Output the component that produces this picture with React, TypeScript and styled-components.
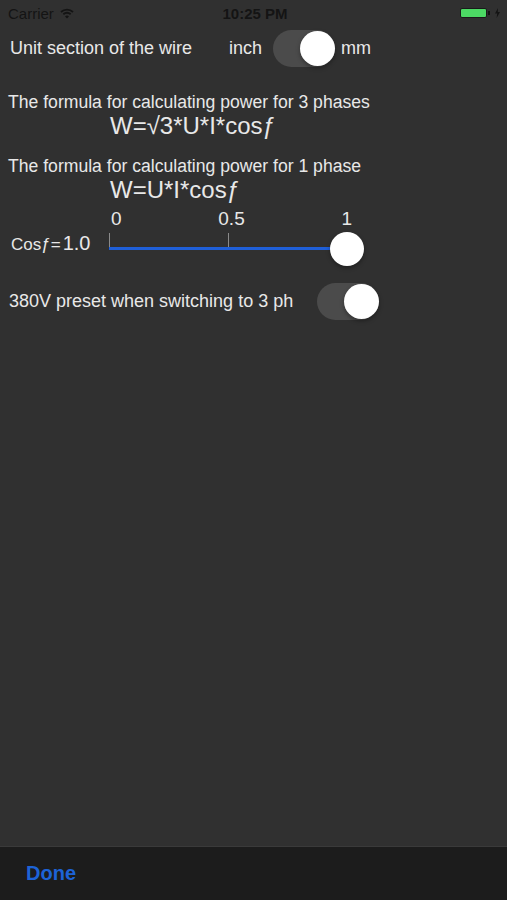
import React from 'react';
import styled, { createGlobalStyle } from 'styled-components';

const GlobalStyle = createGlobalStyle`
  html, body {
    margin: 0;
    padding: 0;
    background: #303030;
  }
  body {
    font-family: 'Liberation Sans', Arial, sans-serif;
  }
`;

const Screen = styled.div`
  display: flex;
  flex-direction: column;
  width: 507px;
  height: 900px;
  background: #303030;
  color: #e8e8e8;
  overflow: hidden;
`;

const StatusBar = styled.div`
  display: grid;
  grid-template-columns: 1fr auto 1fr;
  align-items: center;
  height: 26px;
  padding: 0 7px 0 8px;
  font-size: 15px;
  color: #141414;
`;

const Carrier = styled.div`
  display: flex;
  align-items: center;
  gap: 6px;
`;

const Clock = styled.div`
  font-weight: bold;
  font-size: 15px;
  padding-left: 2px;
`;

const BatteryWrap = styled.div`
  display: flex;
  align-items: center;
  justify-content: flex-end;
  gap: 1px;
`;

const BatteryBody = styled.div`
  width: 25px;
  height: 8px;
  background: #4cd964;
  border: 1px solid #1a1a1a;
  border-radius: 2px;
`;

const BatteryNub = styled.div`
  width: 2px;
  height: 4px;
  background: #141414;
  margin-right: 4px;
`;

const Content = styled.div`
  flex: 1;
  display: flex;
  flex-direction: column;
`;

const UnitRow = styled.div`
  display: flex;
  align-items: center;
  height: 44px;
  padding-left: 10px;
  font-size: 18px;
`;

const UnitText = styled.span<{ $width?: number; $left?: number }>`
  width: ${(p) => (p.$width ? `${p.$width}px` : 'auto')};
  margin-left: ${(p) => p.$left ?? 0}px;
  white-space: nowrap;
`;

const Switch = styled.div<{ $on: boolean }>`
  position: relative;
  width: 62px;
  height: 37px;
  border-radius: 19px;
  background: #4b4b4b;
  flex-shrink: 0;

  &::after {
    content: '';
    position: absolute;
    top: 1px;
    left: ${(p) => (p.$on ? '27px' : '1px')};
    width: 35px;
    height: 35px;
    border-radius: 50%;
    background: #fff;
    box-shadow: 0 2px 4px rgba(0, 0, 0, 0.35);
  }
`;

const FormulaBlock = styled.div<{ $top: number }>`
  display: flex;
  flex-direction: column;
  padding-left: 8px;
  margin-top: ${(p) => p.$top}px;
`;

const FormulaTitle = styled.div`
  font-size: 17.6px;
  line-height: 22px;
  white-space: nowrap;
`;

const Formula = styled.div`
  padding-left: 102px;
  font-size: 24px;
  line-height: 26px;
`;

const SliderBlock = styled.div`
  display: flex;
  align-items: flex-start;
  margin-top: 6px;
  padding-left: 11px;
`;

const CosLabel = styled.div`
  width: 98px;
  margin-top: 22px;
  font-size: 17px;
  line-height: 24px;
  white-space: nowrap;

  b {
    font-weight: normal;
    font-size: 20px;
    margin-left: 2px;
  }
`;

const SliderArea = styled.div`
  display: flex;
  flex-direction: column;
  width: 238px;
`;

const Scale = styled.div`
  display: flex;
  justify-content: space-between;
  font-size: 19px;
  line-height: 20px;
  padding-left: 2px;
  margin-right: -5px;
`;

const Track = styled.div`
  position: relative;
  height: 17px;
  margin-top: 4px;
`;

const Tick = styled.div<{ $at: number }>`
  position: absolute;
  top: 0;
  left: ${(p) => p.$at}%;
  width: 1px;
  height: 14px;
  background: #8a8a8a;
`;

const TrackLine = styled.div`
  position: absolute;
  left: 0;
  right: 0;
  top: 14px;
  height: 3px;
  background: #1f5fd8;
`;

const Thumb = styled.div`
  position: absolute;
  left: calc(100% - 17px);
  top: -1px;
  width: 34px;
  height: 34px;
  border-radius: 50%;
  background: #fff;
  box-shadow: 0 2px 4px rgba(0, 0, 0, 0.35);
`;

const PresetRow = styled.div`
  display: flex;
  align-items: center;
  margin-top: 26px;
  padding-left: 9px;
  font-size: 18px;
`;

const PresetLabel = styled.span`
  width: 308px;
  white-space: nowrap;
`;

const Footer = styled.div`
  height: 53px;
  display: flex;
  align-items: center;
  padding-left: 26px;
  background: #1c1c1c;
  border-top: 1px solid #3a3a3a;
`;

const DoneButton = styled.button`
  background: none;
  border: none;
  padding: 0;
  font-family: inherit;
  font-size: 20px;
  font-weight: bold;
  color: #1d63d6;
`;

const WifiIcon = () => (
  <svg width="14" height="11" viewBox="0 0 14 11">
    <path d="M1 4 A9 9 0 0 1 13 4" stroke="#141414" strokeWidth="1.8" fill="none" />
    <path d="M3.3 6.3 A5.8 5.8 0 0 1 10.7 6.3" stroke="#141414" strokeWidth="1.8" fill="none" />
    <path d="M7 10.5 L5 8.4 A2.8 2.8 0 0 1 9 8.4 Z" fill="#141414" />
  </svg>
);

const Bolt = () => (
  <svg width="5" height="10" viewBox="0 0 5 10">
    <path d="M3 0 L0 5.5 H2.2 L1.6 10 L5 4 H2.8 Z" fill="#141414" />
  </svg>
);

export default function App() {
  return (
    <>
      <GlobalStyle />
      <Screen>
        <StatusBar>
          <Carrier>
            Carrier <WifiIcon />
          </Carrier>
          <Clock>10:25 PM</Clock>
          <BatteryWrap>
            <BatteryBody />
            <BatteryNub />
            <Bolt />
          </BatteryWrap>
        </StatusBar>
        <Content>
          <UnitRow>
            <UnitText $width={219}>Unit section of the wire</UnitText>
            <UnitText $width={44}>inch</UnitText>
            <Switch $on />
            <UnitText $left={6}>mm</UnitText>
          </UnitRow>

          <FormulaBlock $top={21}>
            <FormulaTitle>The formula for calculating power for 3 phases</FormulaTitle>
            <Formula>W=√3*U*I*cosƒ</Formula>
          </FormulaBlock>

          <FormulaBlock $top={16}>
            <FormulaTitle>The formula for calculating power for 1 phase</FormulaTitle>
            <Formula>W=U*I*cosƒ</Formula>
          </FormulaBlock>

          <SliderBlock>
            <CosLabel>
              Cosƒ=<b>1.0</b>
            </CosLabel>
            <SliderArea>
              <Scale>
                <span>0</span>
                <span>0.5</span>
                <span>1</span>
              </Scale>
              <Track>
                <Tick $at={0} />
                <Tick $at={50} />
                <TrackLine />
                <Thumb />
              </Track>
            </SliderArea>
          </SliderBlock>

          <PresetRow>
            <PresetLabel>380V preset when switching to 3 ph</PresetLabel>
            <Switch $on />
          </PresetRow>
        </Content>
        <Footer>
          <DoneButton>Done</DoneButton>
        </Footer>
      </Screen>
    </>
  );
}
